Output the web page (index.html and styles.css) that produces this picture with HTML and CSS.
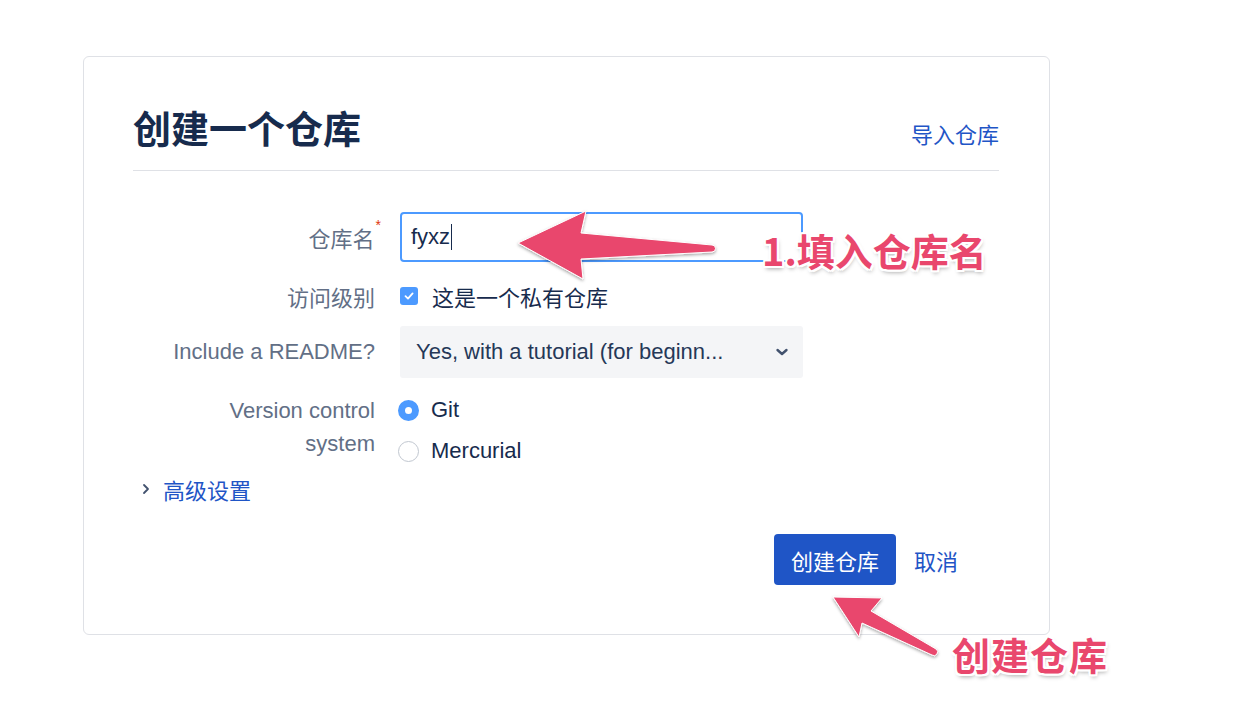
FILE: index.html
```html
<!DOCTYPE html>
<html>
<head>
    <meta charset="utf-8">
    <title>创建一个仓库</title>
    <link rel="stylesheet" href="styles.css">
</head>
<body>
    <div class="card">
        <div class="card-header">
            <h1>创建一个仓库</h1>
            <a class="link import" href="#">导入仓库</a>
        </div>

        <form class="repo-form">
            <div class="row row-name">
                <label class="label">仓库名<span class="required">*</span></label>
                <div class="field text-input">fyxz<span class="caret"></span></div>
            </div>

            <div class="row row-access">
                <label class="label">访问级别</label>
                <div class="field check">
                    <span class="checkbox">
                        <svg width="12" height="12" viewBox="0 0 12 12"><path d="M2.5 6.2 L5 8.6 L9.6 3.4" fill="none" stroke="#fff" stroke-width="1.8" stroke-linecap="round" stroke-linejoin="round"/></svg>
                    </span>
                    这是一个私有仓库
                </div>
            </div>

            <div class="row row-readme">
                <label class="label">Include a README?</label>
                <div class="field select">
                    <span>Yes, with a tutorial (for beginn...</span>
                    <svg width="14" height="10" viewBox="0 0 14 10"><path d="M2.5 3 L7 7 L11.5 3" fill="none" stroke="#42526e" stroke-width="2.4" stroke-linecap="round" stroke-linejoin="round"/></svg>
                </div>
            </div>

            <div class="row row-vcs">
                <label class="label label-multi">Version control<br>system</label>
                <div class="field radios">
                    <div class="radio-option"><span class="radio checked"></span>Git</div>
                    <div class="radio-option"><span class="radio"></span>Mercurial</div>
                </div>
            </div>

            <div class="advanced">
                <svg width="10" height="12" viewBox="0 0 10 12"><path d="M3 2 L7 6 L3 10" fill="none" stroke="#42526e" stroke-width="1.8" stroke-linecap="round" stroke-linejoin="round"/></svg>
                <a class="link" href="#">高级设置</a>
            </div>

            <div class="actions">
                <button type="button" class="btn-primary">创建仓库</button>
                <a class="link cancel" href="#">取消</a>
            </div>
        </form>
    </div>

    <!-- annotations drawn on top of the screenshot -->
    <svg class="arrows" width="1240" height="720" viewBox="0 0 1240 720">
        <defs>
            <filter id="shadow" x="-10%" y="-20%" width="130%" height="150%">
                <feDropShadow dx="0" dy="1.5" stdDeviation="1.5" flood-color="#000" flood-opacity="0.35"/>
            </filter>
        </defs>
        <path filter="url(#shadow)" d="M518 243 L586 211 L581 233 L712 245 A3.5 3.5 0 0 1 712 252 L581 259 L583 279 Z" fill="#e9476d" stroke="#fff" stroke-width="1" stroke-linejoin="round"/>
        <path filter="url(#shadow)" d="M833 597 L882 598 L871 611 L936 649 A3.2 3.2 0 0 1 932 655 L862 623 L859 637 Z" fill="#e9476d" stroke="#fff" stroke-width="1" stroke-linejoin="round"/>
    </svg>
    <div class="note note-name">1.填入仓库名</div>
    <div class="note note-create">创建仓库</div>
</body>
</html>
```

FILE: styles.css
```css
body {
    margin: 0;
    background-color: #fff;
    font-family: "Liberation Sans", "Noto Sans CJK SC", sans-serif;
    color: #172b4d;
    position: relative;
    width: 1240px;
    height: 720px;
    overflow: hidden;
}

.card {
    box-sizing: border-box;
    margin: 56px 0 0 83px;
    width: 967px;
    height: 579px;
    padding: 50px 50px 0 49px;
    border: 1px solid #dfe1e6;
    border-radius: 6px;
}

.card-header {
    display: flex;
    justify-content: space-between;
    align-items: baseline;
    padding-bottom: 17px;
    border-bottom: 1px solid #dfe1e6;
}

h1 {
    margin: 0;
    font-size: 38px;
    line-height: 46px;
    font-weight: 700;
    color: #172b4d;
}

.link {
    color: #1f55c6;
    text-decoration: none;
    font-size: 22px;
}

.repo-form {
    padding-top: 41px;
}

.row {
    display: flex;
    align-items: center;
    gap: 25px;
    margin-bottom: 19px;
}

.label {
    width: 242px;
    flex-shrink: 0;
    text-align: right;
    font-size: 22px;
    color: #626f86;
}

.required {
    color: #de350b;
    font-size: 14px;
    vertical-align: top;
    position: relative;
    top: -4px;
    margin-left: 1px;
    margin-right: -6px;
}

.field {
    box-sizing: border-box;
    width: 403px;
    font-size: 22px;
    color: #172b4d;
}

.text-input {
    height: 50px;
    border: 2px solid #4c9aff;
    border-radius: 4px;
    padding: 0 9px;
    display: flex;
    align-items: center;
}

.caret {
    display: inline-block;
    width: 1px;
    height: 26px;
    background: #172b4d;
    margin-left: 1px;
}

.row-access {
    height: 30px;
    margin-bottom: 15px;
}

.check {
    display: flex;
    align-items: center;
    gap: 14px;
}

.checkbox {
    width: 18px;
    height: 18px;
    border-radius: 3px;
    background: #4c9aff;
    display: flex;
    align-items: center;
    justify-content: center;
}

.select {
    height: 52px;
    background: #f4f5f7;
    border-radius: 3px;
    padding: 0 14px 0 16px;
    display: flex;
    align-items: center;
    justify-content: space-between;
    color: #253858;
}

.row-readme {
    margin-bottom: 16px;
}

.row-vcs {
    align-items: flex-start;
    margin-bottom: 7px;
}

.label-multi {
    line-height: 33px;
}

.radios {
    display: flex;
    flex-direction: column;
    gap: 9px;
}

.radio-option {
    height: 32px;
    display: flex;
    align-items: center;
    gap: 12px;
    margin-left: -2px;
}

.radio {
    box-sizing: border-box;
    width: 21px;
    height: 21px;
    border-radius: 50%;
    border: 1.5px solid #c1c7d0;
    background: #fff;
}

.radio.checked {
    border: 7.5px solid #4c9aff;
    background: #fff;
}

.advanced {
    height: 30px;
    display: flex;
    align-items: center;
    gap: 12px;
    padding-left: 8px;
    margin-bottom: 30px;
}

.actions {
    display: flex;
    justify-content: flex-end;
    align-items: center;
    gap: 18px;
    padding-right: 43px;
}

.btn-primary {
    height: 51px;
    padding: 0 17px;
    border: none;
    border-radius: 4px;
    background: #1f55c6;
    color: #fff;
    font-family: inherit;
    font-size: 22px;
    cursor: pointer;
}

.cancel {
    margin-right: -2px;
}

.arrows {
    position: absolute;
    left: 0;
    top: 0;
}

.note {
    position: absolute;
    font-family: "Noto Sans CJK SC", sans-serif;
    font-weight: 700;
    font-size: 38px;
    line-height: 1;
    color: #e9476d;
    text-shadow: -2px -2px 0 #fff, 2px -2px 0 #fff, -2px 2px 0 #fff, 2px 2px 0 #fff,
        0 -2px 0 #fff, 0 2px 0 #fff, -2px 0 0 #fff, 2px 0 0 #fff, 1px 3px 4px rgba(0, 0, 0, 0.35);
}

.note-name {
    left: 762px;
    top: 231px;
}

.note-create {
    left: 952px;
    top: 635px;
    letter-spacing: 1px;
}
```
